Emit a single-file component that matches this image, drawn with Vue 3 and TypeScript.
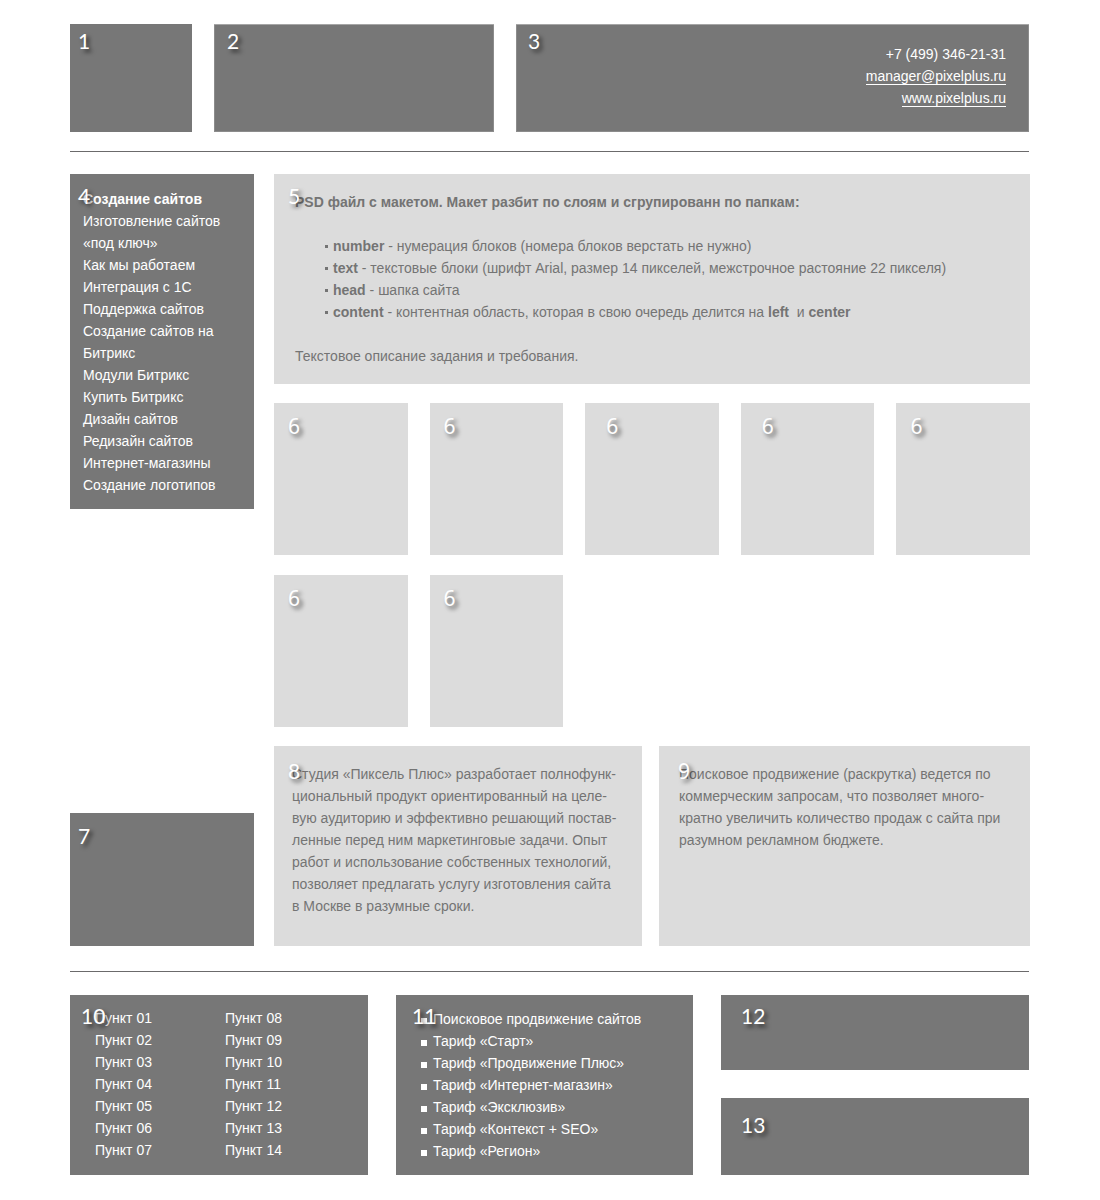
<script setup lang="ts">
interface Term {
  name: string
  text: string
}

const services: string[] = [
  'Создание сайтов',
  'Изготовление сайтов «под ключ»',
  'Как мы работаем',
  'Интеграция с 1С',
  'Поддержка сайтов',
  'Создание сайтов на Битрикс',
  'Модули Битрикс',
  'Купить Битрикс',
  'Дизайн сайтов',
  'Редизайн сайтов',
  'Интернет-магазины',
  'Создание логотипов',
]

const layers: Term[] = [
  { name: 'number', text: 'нумерация блоков (номера блоков верстать не нужно)' },
  { name: 'text', text: 'текстовые блоки (шрифт Arial, размер 14 пикселей, межстрочное растояние 22 пикселя)' },
  { name: 'head', text: 'шапка сайта' },
]

const studio: string[] = [
  'Студия «Пиксель Плюс» разработает полнофунк-',
  'циональный продукт ориентированный на целе-',
  'вую аудиторию и эффективно решающий постав-',
  'ленные перед ним маркетинговые задачи. Опыт',
  'работ и использование собственных технологий,',
  'позволяет предлагать услугу изготовления сайта',
  'в Москве в разумные сроки.',
]

const promotion: string[] = [
  'Поисковое продвижение (раскрутка) ведется по',
  'коммерческим запросам, что позволяет много-',
  'кратно увеличить количество продаж с сайта при',
  'разумном рекламном бюджете.',
]

const points: string[] = Array.from({ length: 14 }, (_, i) => 'Пункт ' + String(i + 1).padStart(2, '0'))

const tariffs: string[] = [
  'Поисковое продвижение сайтов',
  'Тариф «Старт»',
  'Тариф «Продвижение Плюс»',
  'Тариф «Интернет-магазин»',
  'Тариф «Эксклюзив»',
  'Тариф «Контекст + SEO»',
  'Тариф «Регион»',
]
</script>

<template>
  <div class="page">
    <header class="head">
      <div class="box dark"><span class="num n1">1</span></div>
      <div class="box dark edged"><span class="num n2">2</span></div>
      <address class="box dark edged contacts">
        <span class="num n3">3</span>
        <div>+7 (499) 346-21-31</div>
        <div><a href="mailto:manager@pixelplus.ru">manager@pixelplus.ru</a></div>
        <div><a href="#">www.pixelplus.ru</a></div>
      </address>
    </header>

    <div class="content">
      <aside class="left">
        <nav class="box dark menu">
          <span class="num n4">4</span>
          <ul>
            <li v-for="item in services" :key="item"><a href="#">{{ item }}</a></li>
          </ul>
        </nav>
        <div class="box dark banner"><span class="num n7">7</span></div>
      </aside>

      <main class="center">
        <section class="box light intro">
          <span class="num n5">5</span>
          <p><b>PSD файл с макетом. Макет разбит по слоям и сгрупированн по папкам:</b></p>
          <ul>
            <li v-for="layer in layers" :key="layer.name"><b>{{ layer.name }}</b> - {{ layer.text }}</li>
            <li><b>content</b> - контентная область, которая в свою очередь делится на <b>left</b>&nbsp; и <b>center</b></li>
          </ul>
          <p>Текстовое описание задания и требования.</p>
        </section>

        <div class="tiles">
          <div v-for="n in 7" :key="n" class="box light tile"><span class="num n6">6</span></div>
        </div>

        <div class="texts">
          <section class="box light studio">
            <span class="num n8">8</span>
            <p>{{ studio.join('\n') }}</p>
          </section>
          <section class="box light promo">
            <span class="num n9">9</span>
            <p>{{ promotion.join('\n') }}</p>
          </section>
        </div>
      </main>
    </div>

    <footer class="foot">
      <nav class="box dark points">
        <span class="num n10">10</span>
        <ul>
          <li v-for="p in points" :key="p"><a href="#">{{ p }}</a></li>
        </ul>
      </nav>
      <nav class="box dark tariffs">
        <span class="num n11">11</span>
        <ul>
          <li v-for="t in tariffs" :key="t"><a href="#">{{ t }}</a></li>
        </ul>
      </nav>
      <div class="stack">
        <div class="box dark"><span class="num n12">12</span></div>
        <div class="box dark"><span class="num n13">13</span></div>
      </div>
    </footer>
  </div>
</template>

<style>
body {
  margin: 0;
  background: #fff;
}
</style>

<style scoped>
.page {
  padding: 24px 70px 25px;
  font: 14px/22px "Liberation Sans", Arial, sans-serif;
  color: #747474;
}

ul,
p {
  margin: 0;
  padding: 0;
  list-style: none;
}

a {
  color: inherit;
  text-decoration: none;
}

.box {
  position: relative;
  box-sizing: border-box;
}

.dark {
  background: #777;
  color: #fff;
}

.light {
  background: #dcdcdc;
}

.edged {
  box-shadow: inset 0 1px #a6a6a6, inset 0 0 0 1px #8c8c8c;
}

/* block numbers */
.num {
  position: absolute;
  z-index: 1;
  font: 21px/24px Lato, sans-serif;
  color: #fff;
  text-shadow: 3px 3px 4px rgba(0, 0, 0, 0.65);
}

.n1 { left: 8px; top: 5px; }
.n2 { left: 13px; top: 5px; }
.n3 { left: 12px; top: 5px; }
.n4 { left: 8px; top: 10px; }
.n5 { left: 14px; top: 10px; }
.n6 { left: 14px; top: 11px; }
.n7 { left: 8px; top: 11px; }
.n8 { left: 14px; top: 13px; }
.n9 { left: 19px; top: 13px; }
.n10 { left: 11px; top: 9px; }
.n11 { left: 16px; top: 9px; }
.n12 { left: 20px; top: 9px; }
.n13 { left: 20px; top: 15px; }

.n6,
.n9 {
  font-family: "Noto Sans", sans-serif;
}

.head {
  display: grid;
  grid-template-columns: 122fr 280fr 513fr;
  column-gap: 22px;
  min-height: 108px;
  margin-right: 1px;
  padding-bottom: 19px;
  border-bottom: 1px solid #6b6a6b;
}

.contacts {
  padding: 19px 23px;
  font-style: normal;
  text-align: right;
}

.contacts a {
  border-bottom: 1px solid #fff;
}

.content {
  display: grid;
  grid-template-columns: 184fr 756fr;
  column-gap: 20px;
  padding: 22px 0 25px;
}

.left {
  display: flex;
  flex-direction: column;
  justify-content: space-between;
}

.menu {
  padding: 14px 13px 13px;
}

.menu li:first-child {
  font-weight: bold;
}

.banner {
  min-height: 133px;
}

.center {
  display: flex;
  flex-direction: column;
  gap: 19px;
}

.intro {
  padding: 17px 20px 17px 21px;
}

.intro ul {
  padding: 22px 0 22px 30px;
}

.intro li::before {
  content: "";
  display: inline-block;
  width: 3px;
  height: 3px;
  margin-right: 5px;
  vertical-align: 3px;
  background: currentColor;
}

.tiles {
  display: grid;
  grid-template-columns: repeat(5, 1fr);
  gap: 20px 22px;
}

.tile {
  min-height: 152px;
}

.tile:nth-child(5n + 3) .num,
.tile:nth-child(5n + 4) .num {
  left: 21px;
}

.texts {
  display: grid;
  grid-template-columns: 368fr 371fr;
  column-gap: 17px;
  min-height: 200px;
}

.texts p {
  white-space: pre-line;
}

.studio {
  padding: 17px 10px 17px 18px;
}

.promo {
  padding: 17px 10px 17px 20px;
}

.foot {
  display: grid;
  grid-template-columns: 298fr 297fr 308fr;
  column-gap: 28px;
  margin-right: 1px;
  padding-top: 23px;
  border-top: 1px solid #6b6a6b;
}

.points {
  padding: 12px 0 14px 25px;
}

.points ul {
  display: grid;
  grid-template-rows: repeat(7, 22px);
  grid-auto-flow: column;
  grid-auto-columns: 130px;
}

.tariffs {
  padding: 13px 20px 13px 25px;
}

.tariffs li::before {
  content: "";
  display: inline-block;
  width: 6px;
  height: 6px;
  margin-right: 6px;
  background: #fff;
}

.stack {
  display: grid;
  grid-template-rows: 75fr 77fr;
  row-gap: 28px;
}
</style>
